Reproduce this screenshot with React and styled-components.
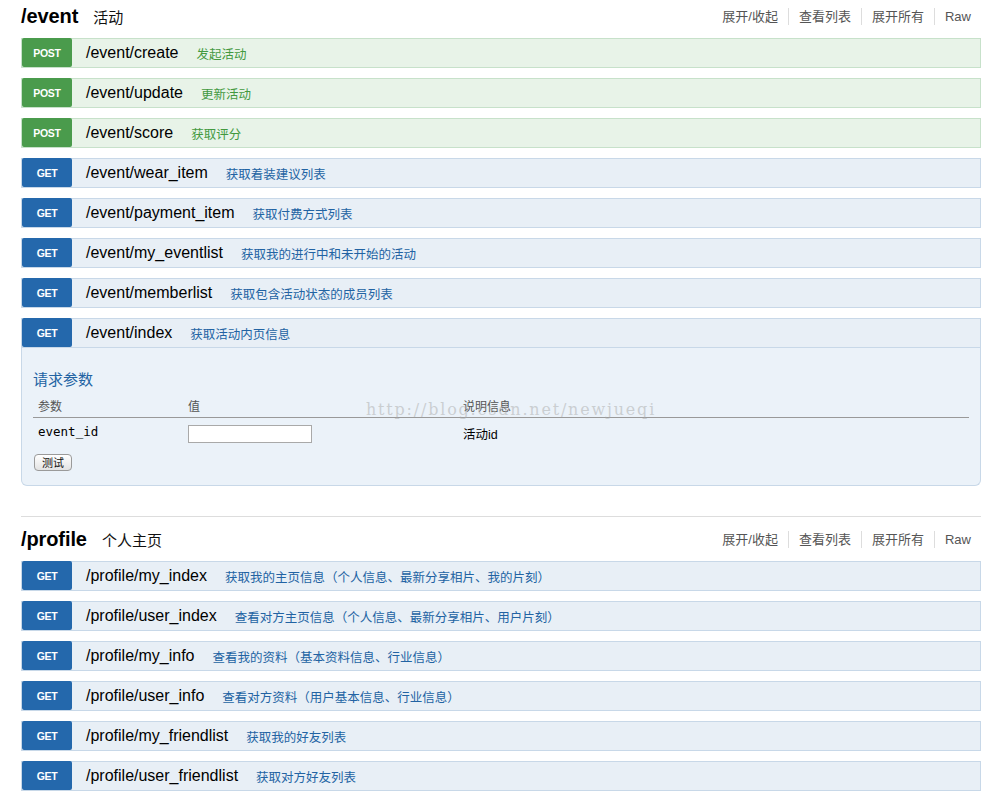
import React from "react";
import styled, { createGlobalStyle } from "styled-components";

const Global = createGlobalStyle`
  html, body { margin: 0; padding: 0; background: #fff; }
  body { font-family: "Liberation Sans", "Noto Sans CJK SC", Arial, sans-serif; color: #000; }
`;

const Page = styled.div`
  width: 960px;
  padding: 4px 0 0 21px;
`;

const Section = styled.section`
  & + & {
    border-top: 1px solid #dddddd;
    margin-top: 30px;
    padding-top: 10px;
  }
`;

const Heading = styled.div`
  display: flex;
  align-items: center;
  height: 24px;
  margin-bottom: 10px;
`;

const Title = styled.h2`
  margin: 0;
  font-size: 20px;
  font-weight: bold;
  letter-spacing: -0.1px;
  color: #000;
`;

const Subtitle = styled.span`
  margin-left: 15px;
  font-size: 15px;
  color: #111;
  font-family: "Noto Sans CJK SC", sans-serif;
`;

const Links = styled.ul`
  margin: 0 0 0 auto;
  padding: 0 10px 0 0;
  list-style: none;
  display: flex;
  align-items: center;
`;

const LinkItem = styled.li`
  font-size: 13px;
  color: #555;
  padding: 0 10px;
  line-height: 17px;
  font-family: "Liberation Sans", "Noto Sans CJK SC", sans-serif;
  & + & { border-left: 1px solid #dddddd; }
  &:last-child { padding-right: 0; }
`;

const Ops = styled.ul`
  list-style: none;
  margin: 0;
  padding: 0;
`;

const Op = styled.li`
  margin-bottom: 10px;
  &:last-child { margin-bottom: 0; }
`;

const palette = {
  get: { badge: "#2468ac", bg: "#e8eff6", border: "#c8d8e8", desc: "#2263a3" },
  post: { badge: "#4a9b4c", bg: "#e8f3e8", border: "#c7e1ca", desc: "#43993f" },
};

const OpHead = styled.div`
  display: flex;
  align-items: center;
  height: 28px;
  background: ${(p) => palette[p.$m].bg};
  border: 1px solid ${(p) => palette[p.$m].border};
`;

const Badge = styled.span`
  width: 50px;
  height: 29px;
  margin: -1px 0 0 0;
  align-self: flex-start;
  display: flex;
  align-items: center;
  justify-content: center;
  background: ${(p) => palette[p.$m].badge};
  color: #fff;
  font-size: 10.5px;
  font-weight: bold;
  border-radius: 2px;
  letter-spacing: -0.3px;
`;

const Path = styled.span`
  font-size: 16px;
  margin-left: 14px;
  color: #000;
`;

const Desc = styled.span`
  font-size: 12.5px;
  margin-left: 18px;
  color: ${(p) => palette[p.$m].desc};
  font-family: "Noto Sans CJK SC", sans-serif;
`;

const OpBody = styled.div`
  position: relative;
  background: #ebf2f9;
  border: 1px solid #c8d8e8;
  border-top: none;
  border-radius: 0 0 6px 6px;
  padding: 21px 11px 14px 11px;
`;

const BodyTitle = styled.h4`
  margin: 0 0 7px 0;
  font-size: 15px;
  line-height: 20px;
  font-weight: normal;
  color: #2263a3;
  font-family: "Noto Sans CJK SC", sans-serif;
`;

const Table = styled.table`
  width: 100%;
  border-collapse: collapse;
`;

const Th = styled.th`
  text-align: left;
  font-weight: normal;
  font-size: 12px;
  color: #555;
  padding: 0 5px 2px 5px;
  height: 19px;
  border-bottom: 1px solid #999;
  width: ${(p) => p.$w || "auto"};
  font-family: "Noto Sans CJK SC", sans-serif;
`;

const Td = styled.td`
  font-size: 12.5px;
  padding: 6px 5px 0 5px;
  vertical-align: top;
  height: 21px;
  color: #000;
  font-family: ${(p) => (p.$mono ? '"DejaVu Sans Mono", monospace' : '"Liberation Sans", "Noto Sans CJK SC", sans-serif')};
`;

const Input = styled.input`
  width: 120px;
  height: 14px;
  border: 1px solid #a9a9a9;
  padding: 1px;
  margin-top: 1px;
  background: #fff;
`;

const Button = styled.button`
  margin: 9px 0 0 1px;
  height: 17px;
  width: 38px;
  padding: 0;
  font-size: 11px;
  border: 1px solid #9a9a9a;
  border-radius: 4px;
  background: linear-gradient(#ffffff, #e3e3e3);
  color: #111;
  font-family: "Noto Sans CJK SC", sans-serif;
  line-height: 15px;
`;

const Watermark = styled.span`
  position: absolute;
  left: 344px;
  top: 52px;
  font-family: "DejaVu Serif", "Liberation Serif", serif;
  font-size: 16px;
  color: rgba(170, 170, 170, 0.5);
  letter-spacing: 1.8px;
  pointer-events: none;
  white-space: nowrap;
`;

const sections = [
  {
    title: "/event",
    sub: "活动",
    ops: [
      ["post", "/event/create", "发起活动"],
      ["post", "/event/update", "更新活动"],
      ["post", "/event/score", "获取评分"],
      ["get", "/event/wear_item", "获取着装建议列表"],
      ["get", "/event/payment_item", "获取付费方式列表"],
      ["get", "/event/my_eventlist", "获取我的进行中和未开始的活动"],
      ["get", "/event/memberlist", "获取包含活动状态的成员列表"],
      ["get", "/event/index", "获取活动内页信息", true],
    ],
  },
  {
    title: "/profile",
    sub: "个人主页",
    ops: [
      ["get", "/profile/my_index", "获取我的主页信息（个人信息、最新分享相片、我的片刻）"],
      ["get", "/profile/user_index", "查看对方主页信息（个人信息、最新分享相片、用户片刻）"],
      ["get", "/profile/my_info", "查看我的资料（基本资料信息、行业信息）"],
      ["get", "/profile/user_info", "查看对方资料（用户基本信息、行业信息）"],
      ["get", "/profile/my_friendlist", "获取我的好友列表"],
      ["get", "/profile/user_friendlist", "获取对方好友列表"],
    ],
  },
];

export default function App() {
  return (
    <>
      <Global />
      <Page>
        {sections.map((s) => (
          <Section key={s.title}>
            <Heading>
              <Title>{s.title}</Title>
              <Subtitle>{s.sub}</Subtitle>
              <Links>
                <LinkItem>展开/收起</LinkItem>
                <LinkItem>查看列表</LinkItem>
                <LinkItem>展开所有</LinkItem>
                <LinkItem>Raw</LinkItem>
              </Links>
            </Heading>
            <Ops>
              {s.ops.map(([m, path, desc, open]) => (
                <Op key={path}>
                  <OpHead $m={m}>
                    <Badge $m={m}>{m.toUpperCase()}</Badge>
                    <Path>{path}</Path>
                    <Desc $m={m}>{desc}</Desc>
                  </OpHead>
                  {open && (
                    <OpBody>
                      <BodyTitle>请求参数</BodyTitle>
                      <Table>
                        <thead>
                          <tr>
                            <Th $w="140px">参数</Th>
                            <Th $w="265px">值</Th>
                            <Th>说明信息</Th>
                          </tr>
                        </thead>
                        <tbody>
                          <tr>
                            <Td $mono>event_id</Td>
                            <Td><Input type="text" /></Td>
                            <Td>活动id</Td>
                          </tr>
                        </tbody>
                      </Table>
                      <Button>测试</Button>
                      <Watermark>http://blog.csdn.net/newjueqi</Watermark>
                    </OpBody>
                  )}
                </Op>
              ))}
            </Ops>
          </Section>
        ))}
      </Page>
    </>
  );
}
